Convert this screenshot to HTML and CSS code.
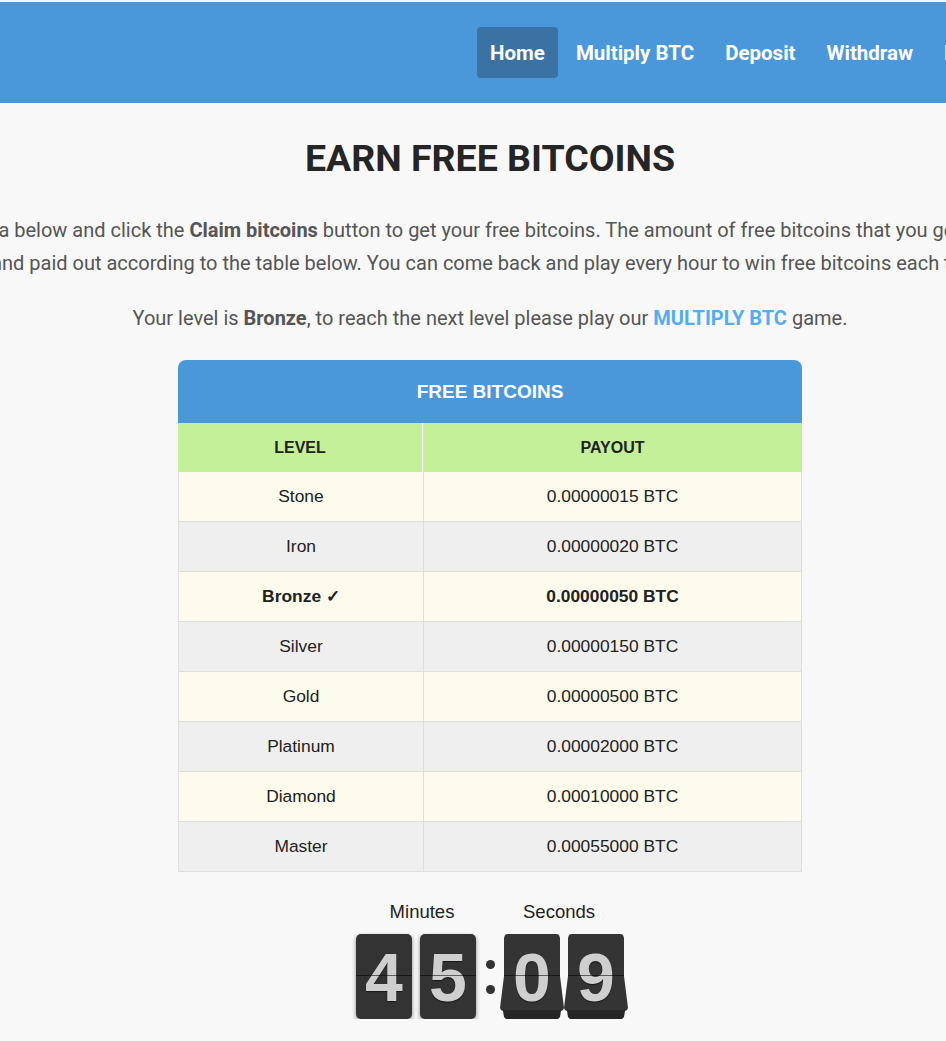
FILE: index.html
```html
<!DOCTYPE html>
<html lang="en">
<head>
<meta charset="utf-8">
<title>Earn Free Bitcoins</title>
<link rel="stylesheet" href="styles.css">
</head>
<body>
<div class="site">
  <header class="topbar">
    <nav class="nav">
      <a class="nav-item active" href="#">Home</a>
      <a class="nav-item" href="#">Multiply BTC</a>
      <a class="nav-item" href="#">Deposit</a>
      <a class="nav-item" href="#">Withdraw</a>
      <a class="nav-item" href="#">Lottery</a>
    </nav>
  </header>
  <main class="page">
    <h1 class="title">EARN FREE BITCOINS</h1>
    <p class="intro">
      <span class="line">Solve the captcha below and click the <b>Claim bitcoins</b> button to get your free bitcoins. The amount of free bitcoins that you get is determined by a</span>
      <span class="line">and paid out according to the table below. You can come back and play every hour to win free bitcoins each time!</span>
    </p>
    <p class="level">Your level is <b>Bronze</b>, to reach the next level please play our <a class="link" href="#">MULTIPLY BTC</a> game.</p>
    <table class="payout">
      <thead>
        <tr><th class="cap" colspan="2">FREE BITCOINS</th></tr>
        <tr class="cols"><th class="col-level">LEVEL</th><th>PAYOUT</th></tr>
      </thead>
      <tbody>
        <tr><td>Stone</td><td>0.00000015 BTC</td></tr>
        <tr><td>Iron</td><td>0.00000020 BTC</td></tr>
        <tr class="current"><td>Bronze &#10003;</td><td>0.00000050 BTC</td></tr>
        <tr><td>Silver</td><td>0.00000150 BTC</td></tr>
        <tr><td>Gold</td><td>0.00000500 BTC</td></tr>
        <tr><td>Platinum</td><td>0.00002000 BTC</td></tr>
        <tr><td>Diamond</td><td>0.00010000 BTC</td></tr>
        <tr><td>Master</td><td>0.00055000 BTC</td></tr>
      </tbody>
    </table>
    <div class="clock">
      <div class="group">
        <div class="label label-min">Minutes</div>
        <div class="digits">
          <div class="card"><span>4</span></div>
          <div class="card"><span>5</span></div>
        </div>
      </div>
      <div class="colon"><i></i><i></i></div>
      <div class="group">
        <div class="label label-sec">Seconds</div>
        <div class="digits">
          <div class="card flip"><span>0</span></div>
          <div class="card flip"><span>9</span></div>
        </div>
      </div>
    </div>
  </main>
</div>
</body>
</html>
```

FILE: styles.css
```css
html, body {
  margin: 0;
  padding: 0;
  overflow: hidden;
  background: #f8f8f8;
}
body {
  font-family: Roboto, "Liberation Sans", Arial, sans-serif;
  color: #555;
}
.site {
  width: 980px;
  padding-top: 2px;
}
.topbar {
  height: 101px;
  background: #4a98d9;
  display: flex;
  align-items: center;
  padding-left: 477px;
  overflow: hidden;
}
.nav {
  display: flex;
  gap: 5px;
  white-space: nowrap;
}
.nav-item {
  display: flex;
  align-items: center;
  height: 51px;
  padding: 0 13px;
  border-radius: 4px;
  color: #fff;
  font-weight: 700;
  font-size: 20.5px;
  text-decoration: none;
}
.nav-item.active {
  background: #3a72a3;
}
.page {
  text-align: center;
  display: flex;
  flex-direction: column;
  align-items: center;
}
.title {
  margin: 33px 0 0;
  font-size: 37.5px;
  line-height: 44px;
  font-weight: 700;
  color: #252525;
}
.intro {
  margin: 34px 0 0;
  display: flex;
  flex-direction: column;
  align-items: center;
  font-size: 20px;
  line-height: 33px;
}
.line {
  white-space: nowrap;
}
.level {
  margin: 26px 0 0;
  font-size: 20px;
  line-height: 24px;
}
.link {
  color: #53aef0;
  font-weight: 700;
  text-decoration: none;
}
.payout {
  margin-top: 30px;
  width: 624px;
  border-collapse: separate;
  border-spacing: 0;
  font-family: "Liberation Sans", Arial, sans-serif;
  color: #222;
}
.payout th.cap {
  background: #4a98d9;
  color: #fff;
  height: 63px;
  padding: 0;
  font-size: 19px;
  font-weight: 700;
  border-radius: 8px 8px 0 0;
}
.payout .cols th {
  background: #c5f09a;
  height: 49px;
  padding: 0;
  font-size: 16px;
  font-weight: 700;
  color: #222;
}
.payout .cols th.col-level {
  width: 244px;
  border-right: 1px solid #fff;
}
.payout td {
  height: 49px;
  padding: 0;
  font-size: 17.4px;
  border-bottom: 1px solid #dddddd;
  border-left: 1px solid #dddddd;
}
.payout td:last-child {
  border-right: 1px solid #dddddd;
}
.payout tbody tr:nth-child(odd) td {
  background: #fdfbeb;
}
.payout tbody tr:nth-child(even) td {
  background: #efefef;
}
.payout tr.current td {
  font-weight: 700;
}
.clock {
  margin-top: 30px;
  display: flex;
  align-items: flex-end;
  font-family: "Liberation Sans", Arial, sans-serif;
}
.group {
  display: flex;
  flex-direction: column;
  align-items: center;
}
.label {
  font-size: 18.5px;
  line-height: 20px;
  color: #222;
  margin-bottom: 12px;
}
.label-min {
  padding-left: 12px;
}
.label-sec {
  padding-right: 10px;
}
.digits {
  display: flex;
  gap: 8px;
}
.card {
  position: relative;
  width: 56px;
  height: 85px;
  border-radius: 5px;
  background: #333;
  box-shadow: 0 2px 4px rgba(0,0,0,0.45);
  display: flex;
  align-items: center;
  justify-content: center;
}
.card::after {
  content: "";
  position: absolute;
  left: 0;
  right: 0;
  top: 41px;
  height: 1px;
  background: rgba(0,0,0,0.55);
  z-index: 2;
}
.card span {
  position: relative;
  z-index: 1;
  font-size: 68px;
  font-weight: 700;
  color: #cfcfcf;
  line-height: 1;
  margin-top: 1px;
  text-shadow: 0 1px 1px rgba(0,0,0,0.6);
}
.card.flip {
  background: transparent;
  box-shadow: none;
}
.card.flip::before {
  content: "";
  position: absolute;
  left: -4px;
  right: -4px;
  top: 0;
  bottom: 0;
  background: linear-gradient(to bottom, #343434 0, #343434 76px, #262626 76px);
  clip-path: polygon(7px 0, 57px 0, 59px 1px, 60px 4px, 60px 42px, 64px 74px, 63px 76px, 61px 77px, 60px 83px, 58px 85px, 6px 85px, 4px 83px, 3px 77px, 1px 76px, 0 74px, 4px 42px, 4px 4px, 5px 1px);
  filter: drop-shadow(0 2px 2px rgba(0,0,0,0.5));
  z-index: 0;
}
.colon {
  width: 28px;
  height: 85px;
  display: flex;
  flex-direction: column;
  align-items: center;
  justify-content: center;
  gap: 16px;
}
.colon i {
  width: 9px;
  height: 9px;
  border-radius: 50%;
  background: #333;
}
```
